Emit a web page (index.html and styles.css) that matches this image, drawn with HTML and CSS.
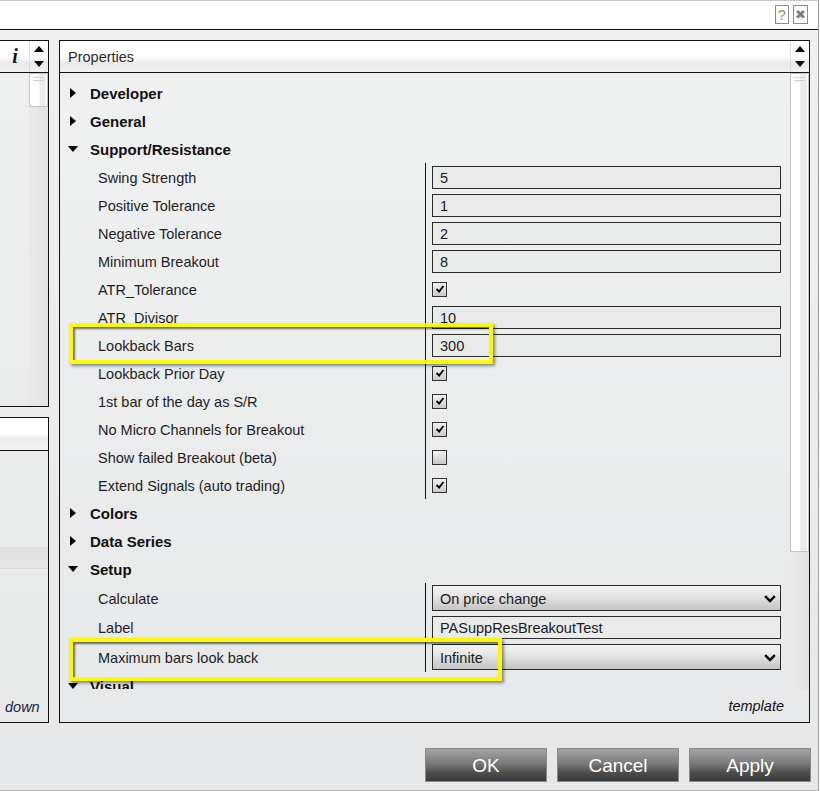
FILE: index.html
```html
<!DOCTYPE html>
<html>
<head>
<meta charset="utf-8">
<link rel="stylesheet" href="styles.css">
</head>
<body>
<div class="dialog">
  <div class="titlebar">
    <span class="tb-btn help">?</span>
    <span class="tb-btn close">&#10006;</span>
  </div>
  <div class="main">
    <div class="leftcol">
      <div class="lpanel lp1">
        <div class="lhead">
          <span class="info">i</span>
          <div class="arrows"><span class="up"></span><span class="dn"></span></div>
        </div>
        <div class="lbody">
          <div class="fill"></div>
          <div class="vscroll"><div class="thumb short"><i></i><i></i></div></div>
        </div>
      </div>
      <div class="lpanel lp2">
        <div class="lhead2"></div>
        <div class="lbody2">
          <div class="band"></div>
          <div class="grow"></div>
          <div class="downtext">down</div>
        </div>
      </div>
    </div>
    <div class="rpanel">
      <div class="rhead">
        <span class="title">Properties</span>
        <div class="arrows"><span class="up"></span><span class="dn"></span></div>
      </div>
      <div class="rbody">
        <div class="tree">
          <div class="cat"><span class="ico"><span class="tri-r"></span></span><span class="ctext">Developer</span></div>
          <div class="cat"><span class="ico"><span class="tri-r"></span></span><span class="ctext">General</span></div>
          <div class="cat"><span class="ico"><span class="tri-d"></span></span><span class="ctext">Support/Resistance</span></div>
          <div class="group">
            <div class="prop"><span class="name">Swing Strength</span><span class="val"><span class="input">5</span></span></div>
            <div class="prop"><span class="name">Positive Tolerance</span><span class="val"><span class="input">1</span></span></div>
            <div class="prop"><span class="name">Negative Tolerance</span><span class="val"><span class="input">2</span></span></div>
            <div class="prop"><span class="name">Minimum Breakout</span><span class="val"><span class="input">8</span></span></div>
            <div class="prop"><span class="name">ATR_Tolerance</span><span class="val"><span class="check on"><svg viewBox="0 0 14 14" width="12" height="12"><path d="M3 7 L6 10 L11 3.5" fill="none" stroke="#000" stroke-width="2.2"/></svg></span></span></div>
            <div class="prop"><span class="name">ATR_Divisor</span><span class="val"><span class="input">10</span></span></div>
            <div class="prop"><span class="name">Lookback Bars</span><span class="val"><span class="input">300</span></span></div>
            <div class="prop"><span class="name">Lookback Prior Day</span><span class="val"><span class="check on"><svg viewBox="0 0 14 14" width="12" height="12"><path d="M3 7 L6 10 L11 3.5" fill="none" stroke="#000" stroke-width="2.2"/></svg></span></span></div>
            <div class="prop"><span class="name">1st bar of the day as S/R</span><span class="val"><span class="check on"><svg viewBox="0 0 14 14" width="12" height="12"><path d="M3 7 L6 10 L11 3.5" fill="none" stroke="#000" stroke-width="2.2"/></svg></span></span></div>
            <div class="prop"><span class="name">No Micro Channels for Breakout</span><span class="val"><span class="check on"><svg viewBox="0 0 14 14" width="12" height="12"><path d="M3 7 L6 10 L11 3.5" fill="none" stroke="#000" stroke-width="2.2"/></svg></span></span></div>
            <div class="prop"><span class="name">Show failed Breakout (beta)</span><span class="val"><span class="check"></span></span></div>
            <div class="prop"><span class="name">Extend Signals (auto trading)</span><span class="val"><span class="check on"><svg viewBox="0 0 14 14" width="12" height="12"><path d="M3 7 L6 10 L11 3.5" fill="none" stroke="#000" stroke-width="2.2"/></svg></span></span></div>
          </div>
          <div class="cat"><span class="ico"><span class="tri-r"></span></span><span class="ctext">Colors</span></div>
          <div class="cat"><span class="ico"><span class="tri-r"></span></span><span class="ctext">Data Series</span></div>
          <div class="cat"><span class="ico"><span class="tri-d"></span></span><span class="ctext">Setup</span></div>
          <div class="group">
            <div class="prop tall"><span class="name">Calculate</span><span class="val"><span class="select"><span>On price change</span><svg viewBox="0 0 12 8" width="12" height="8"><path d="M1.2 1.2 L6 6 L10.8 1.2" fill="none" stroke="#000" stroke-width="2.4"/></svg></span></span></div>
            <div class="prop mid"><span class="name">Label</span><span class="val"><span class="input">PASuppResBreakoutTest</span></span></div>
            <div class="prop tall"><span class="name">Maximum bars look back</span><span class="val"><span class="select"><span>Infinite</span><svg viewBox="0 0 12 8" width="12" height="8"><path d="M1.2 1.2 L6 6 L10.8 1.2" fill="none" stroke="#000" stroke-width="2.4"/></svg></span></span></div>
          </div>
          <div class="cat"><span class="ico"><span class="tri-d"></span></span><span class="ctext">Visual</span></div>
        </div>
        <div class="vscroll"><div class="thumb long"><i></i><i></i></div></div>
      </div>
      <div class="desc">template</div>
    </div>
  </div>
  <div class="footer">
    <span class="btn">OK</span>
    <span class="btn">Cancel</span>
    <span class="btn">Apply</span>
  </div>
</div>
<div class="hl hl1"></div>
<div class="hl hl2"></div>
</body>
</html>
```

FILE: styles.css
```css
html, body {
  margin: 0;
  padding: 0;
}
body {
  width: 820px;
  height: 791px;
  overflow: hidden;
  background: #ffffff;
  font-family: "Liberation Sans", Arial, sans-serif;
  position: relative;
}
.dialog {
  box-sizing: border-box;
  width: 819px;
  height: 791px;
  border-top: 1px solid #c8c8c8;
  border-right: 1px solid #9c9c9c;
  border-bottom: 1px solid #b4b4b4;
  background: linear-gradient(#eff0f0, #e6e7e8);
  display: flex;
  flex-direction: column;
}
.titlebar {
  box-sizing: border-box;
  height: 29px;
  background: #ffffff;
  border-bottom: 1px solid #111;
  display: flex;
  justify-content: flex-end;
  align-items: flex-start;
  padding: 4px 10px 0 0;
  gap: 4px;
}
.tb-btn {
  box-sizing: border-box;
  width: 14px;
  height: 19px;
  border: 1px solid #8c8c8c;
  display: flex;
  align-items: center;
  justify-content: center;
  background: #fff;
  font-size: 13px;
  line-height: 1;
}
.help { color: #a08a66; font-size: 14px; }
.close { color: #7e7e7e; font-size: 13px; width: 15px; }

.main {
  display: flex;
  padding-top: 10px;
  gap: 10px;
  height: 693px;
  box-sizing: border-box;
}
.leftcol {
  width: 49px;
  display: flex;
  flex-direction: column;
  gap: 10px;
}
.lpanel {
  box-sizing: border-box;
  border: 1px solid #111;
  border-left: none;
  display: flex;
  flex-direction: column;
}
.lp1 { height: 367px; background: linear-gradient(#eff0f0, #eaebeb); }
.lp2 { flex: 1; background: linear-gradient(#ebecec, #e7e8e8); }
.lhead {
  box-sizing: border-box;
  height: 32px;
  border-bottom: 1px solid #111;
  display: flex;
  background: linear-gradient(#ffffff 0, #ffffff 50%, #e9e9e9 70%, #f1f1f1 100%);
}
.info {
  flex: 1;
  display: flex;
  align-items: center;
  justify-content: center;
  font-family: "Liberation Serif", "Times New Roman", serif;
  font-style: italic;
  font-weight: bold;
  font-size: 20px;
  color: #111;
  padding-left: 1px;
}
.arrows {
  width: 18px;
  border-left: 1px solid #dcdcdc;
  display: flex;
  flex-direction: column;
  align-items: center;
  justify-content: center;
  gap: 9px;
}
.up {
  width: 0; height: 0;
  border-left: 5px solid transparent;
  border-right: 5px solid transparent;
  border-bottom: 6px solid #000;
}
.dn {
  width: 0; height: 0;
  border-left: 5px solid transparent;
  border-right: 5px solid transparent;
  border-top: 6px solid #000;
}
.lbody {
  flex: 1;
  display: flex;
}
.fill { flex: 1; }
.vscroll {
  box-sizing: border-box;
  width: 19px;
  background: linear-gradient(to right, #e9e9e9, #e2e2e2);
  display: flex;
  flex-direction: column;
}
.thumb {
  box-sizing: border-box;
  border: 1px solid #c4c4c4;
  background: linear-gradient(to right, #ffffff 0, #ffffff 50%, #ebebeb 58%, #ebebeb 88%, #ffffff 100%);
  display: flex;
  flex-direction: column;
  align-items: center;
  padding-top: 3px;
  gap: 2px;
}
.thumb i {
  display: block;
  width: 11px;
  height: 1px;
  background: #cfcfcf;
}
.thumb.short { height: 34px; }
.thumb.long { height: 479px; }

.lhead2 {
  box-sizing: border-box;
  height: 33px;
  border-bottom: 1px solid #111;
  background: linear-gradient(#ffffff 0, #ffffff 50%, #ececec 65%, #f4f4f4 100%);
}
.lbody2 {
  flex: 1;
  display: flex;
  flex-direction: column;
}
.band {
  margin-top: 96px;
  height: 21px;
  background: linear-gradient(#e0e0e0, #e6e6e6);
  border-bottom: 1px solid #d8d8d8;
}
.grow { flex: 1; }
.downtext {
  font-style: italic;
  font-size: 14.5px;
  color: #1b2446;
  padding: 0 0 6px 5px;
  line-height: 18px;
}

.rpanel {
  box-sizing: border-box;
  width: 751px;
  height: 683px;
  border: 1px solid #111;
  background: linear-gradient(#f0f1f1, #e7e8e9);
  display: flex;
  flex-direction: column;
}
.rhead {
  box-sizing: border-box;
  height: 32px;
  border-bottom: 1px solid #111;
  display: flex;
  background: linear-gradient(#ffffff 0, #ffffff 50%, #e9e9e9 72%, #f1f1f1 100%);
}
.title {
  flex: 1;
  padding-left: 8px;
  display: flex;
  align-items: center;
  font-size: 14.5px;
  color: #2a2a2a;
}
.rhead .arrows { width: 18px; }
.rbody {
  height: 616px;
  display: flex;
}
.tree {
  flex: 1;
  overflow: hidden;
  padding-top: 6px;
  box-sizing: border-box;
}
.cat {
  height: 28px;
  display: flex;
  align-items: center;
  padding-left: 8px;
  font-size: 15px;
  font-weight: bold;
  color: #111;
}
.ctext { padding-top: 1px; }
.ico {
  width: 22px;
  height: 28px;
  display: flex;
  align-items: center;
}
.tri-r {
  width: 0; height: 0;
  margin-left: 2px;
  border-top: 5px solid transparent;
  border-bottom: 5px solid transparent;
  border-left: 6px solid #000;
}
.tri-d {
  width: 0; height: 0;
  border-left: 5px solid transparent;
  border-right: 5px solid transparent;
  border-top: 6px solid #000;
}
.prop {
  height: 28px;
  display: flex;
  font-size: 14.5px;
  color: #1e1e1e;
}
.prop.tall { height: 30px; }
.prop.mid { height: 29px; }
.name {
  width: 327px;
  padding-left: 38px;
  padding-top: 1px;
  box-sizing: content-box;
  display: flex;
  align-items: center;
}
.val {
  flex: 1;
  border-left: 1px solid #111;
  padding: 0 9px 0 6px;
  display: flex;
  align-items: center;
}
.input {
  box-sizing: border-box;
  width: 100%;
  height: 23px;
  border: 1px solid #2b2b2b;
  background: #e9eaea;
  padding: 1px 0 0 7px;
  display: flex;
  align-items: center;
  color: #1a1a1a;
}
.check {
  box-sizing: border-box;
  width: 15px;
  height: 15px;
  border: 1px solid #333;
  background: linear-gradient(#f2f2f2, #c9c9c9);
  display: flex;
  align-items: center;
  justify-content: center;
}
.select {
  box-sizing: border-box;
  width: 100%;
  height: 26px;
  border: 1px solid #2b2b2b;
  background: linear-gradient(#f4f4f4 0, #e8e8e8 35%, #c4c4c4 100%);
  padding: 1px 4px 0 7px;
  display: flex;
  align-items: center;
  justify-content: space-between;
  color: #1a1a1a;
}
.desc {
  flex: 1;
  display: flex;
  align-items: center;
  justify-content: flex-end;
  padding-right: 25px;
  font-style: italic;
  font-size: 14.5px;
  color: #111;
}
.footer {
  display: flex;
  justify-content: flex-end;
  gap: 10px;
  padding: 25px 7px 0 0;
}
.btn {
  box-sizing: border-box;
  width: 122px;
  height: 34px;
  border: 1px solid #8a8a8a;
  background: linear-gradient(#a4a4a4 0, #7a7a7a 45%, #4c4c4c 75%, #393939 100%);
  color: #ffffff;
  font-size: 19px;
  padding-top: 1px;
  display: flex;
  align-items: center;
  justify-content: center;
}
.hl {
  position: absolute;
  box-sizing: border-box;
  border: 4px solid #fafa00;
  box-shadow: 2px 2px 3px rgba(0,0,0,0.45), inset 2px 2px 2px rgba(0,0,0,0.55);
}
.hl1 { left: 69px; top: 323px; width: 424px; height: 41px; }
.hl2 { left: 69px; top: 638px; width: 433px; height: 43px; }
```
